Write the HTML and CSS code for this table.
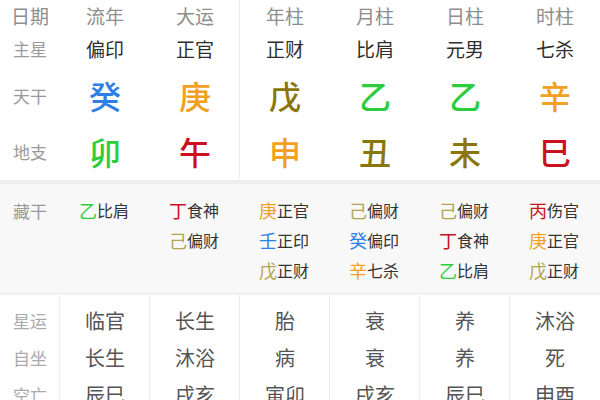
FILE: index.html
```html
<!DOCTYPE html>
<html lang="zh">
<head>
<meta charset="utf-8">
<link rel="stylesheet" href="styles.css">
</head>
<body>
<div class="chart">
  <section class="top">
    <div class="col label">
      <div class="c h">日期</div>
      <div class="c zx">主星</div>
      <div class="c stem">天干</div>
      <div class="c br">地支</div>
    </div>
    <div class="col">
      <div class="c h">流年</div>
      <div class="c zx v">偏印</div>
      <div class="c stem big water">癸</div>
      <div class="c br big wood">卯</div>
    </div>
    <div class="col">
      <div class="c h">大运</div>
      <div class="c zx v">正官</div>
      <div class="c stem big metal">庚</div>
      <div class="c br big fire">午</div>
    </div>
    <div class="col sep">
      <div class="c h">年柱</div>
      <div class="c zx v">正财</div>
      <div class="c stem big earth">戊</div>
      <div class="c br big metal">申</div>
    </div>
    <div class="col">
      <div class="c h">月柱</div>
      <div class="c zx v">比肩</div>
      <div class="c stem big wood">乙</div>
      <div class="c br big earth">丑</div>
    </div>
    <div class="col">
      <div class="c h">日柱</div>
      <div class="c zx v">元男</div>
      <div class="c stem big wood">乙</div>
      <div class="c br big earth">未</div>
    </div>
    <div class="col">
      <div class="c h">时柱</div>
      <div class="c zx v">七杀</div>
      <div class="c stem big metal">辛</div>
      <div class="c br big fire">巳</div>
    </div>
  </section>

  <section class="hidden">
    <div class="col label"><div class="it">藏干</div></div>
    <div class="col"><div class="it"><span class="s wood">乙</span>比肩</div></div>
    <div class="col">
      <div class="it"><span class="s fire">丁</span>食神</div>
      <div class="it"><span class="s earth2">己</span>偏财</div>
    </div>
    <div class="col">
      <div class="it"><span class="s metal">庚</span>正官</div>
      <div class="it"><span class="s water">壬</span>正印</div>
      <div class="it"><span class="s earth2">戊</span>正财</div>
    </div>
    <div class="col">
      <div class="it"><span class="s earth2">己</span>偏财</div>
      <div class="it"><span class="s water">癸</span>偏印</div>
      <div class="it"><span class="s metal">辛</span>七杀</div>
    </div>
    <div class="col">
      <div class="it"><span class="s earth2">己</span>偏财</div>
      <div class="it"><span class="s fire">丁</span>食神</div>
      <div class="it"><span class="s wood">乙</span>比肩</div>
    </div>
    <div class="col">
      <div class="it"><span class="s fire">丙</span>伤官</div>
      <div class="it"><span class="s metal">庚</span>正官</div>
      <div class="it"><span class="s earth2">戊</span>正财</div>
    </div>
  </section>

  <section class="bottom">
    <div class="col label">
      <div class="r">星运</div>
      <div class="r">自坐</div>
      <div class="r">空亡</div>
    </div>
    <div class="col line">
      <div class="r">临官</div>
      <div class="r">长生</div>
      <div class="r">辰巳</div>
    </div>
    <div class="col line">
      <div class="r">长生</div>
      <div class="r">沐浴</div>
      <div class="r">戌亥</div>
    </div>
    <div class="col line">
      <div class="r">胎</div>
      <div class="r">病</div>
      <div class="r">寅卯</div>
    </div>
    <div class="col line">
      <div class="r">衰</div>
      <div class="r">衰</div>
      <div class="r">戌亥</div>
    </div>
    <div class="col line">
      <div class="r">养</div>
      <div class="r">养</div>
      <div class="r">辰巳</div>
    </div>
    <div class="col line">
      <div class="r">沐浴</div>
      <div class="r">死</div>
      <div class="r">申酉</div>
    </div>
  </section>
</div>
</body>
</html>
```

FILE: styles.css
```css
html, body {
  margin: 0;
  padding: 0;
  background: #fff;
  overflow: hidden;
}
body {
  font-family: "Noto Sans CJK SC", "Noto Sans", sans-serif;
  width: 600px;
  height: 400px;
}
.chart {
  width: 600px;
}
section {
  display: flex;
}
.col {
  width: 90px;
  display: flex;
  flex-direction: column;
  align-items: center;
}
.col.label {
  width: 60px;
}

/* top section */
.top {
  background: #fff;
  padding-bottom: 2px;
}
.top .col {
  height: 178px;
}
.top .col.sep {
  border-left: 1px solid #ececec;
  margin-left: -1px;
}
.c {
  display: flex;
  align-items: center;
  justify-content: center;
  line-height: 1;
}
.c.h {
  height: 30px;
  font-size: 19px;
  color: #8e8e8e;
}
.c.zx {
  height: 36px;
  font-size: 17px;
  color: #9a9a9a;
}
.c.zx.v {
  font-size: 19px;
  color: #2e2e2e;
}
.c.stem {
  height: 58px;
  font-size: 17px;
  color: #9a9a9a;
}
.c.br {
  height: 54px;
  font-size: 17px;
  color: #9a9a9a;
}
.c.big {
  font-size: 32px;
  font-weight: 500;
}

/* element colours */
.water { color: #2d7fe6 !important; }
.wood { color: #2bcd3c !important; }
.metal { color: #f2a024 !important; }
.fire { color: #cc1020 !important; }
.earth { color: #8a760a !important; }
.earth2 { color: #b4a452 !important; }

/* hidden stems */
.hidden {
  background: #f8f8f8;
  border-top: 4px solid #eeeeee;
  padding: 11px 0 5px;
  height: 92px;
}
.it {
  height: 30px;
  display: flex;
  align-items: center;
  font-size: 16px;
  color: #333;
  line-height: 1;
  width: 52px;
}
.label .it {
  color: #999;
  font-size: 17px;
  justify-content: center;
  width: auto;
}
.it .s {
  font-size: 18px;
}

/* bottom */
.bottom {
  border-top: 3px solid #f2f2f2;
  background: #fff;
}
.bottom .col {
  padding-top: 7px;
}
.bottom .col.line {
  border-left: 1px solid #ececec;
  margin-left: -1px;
}
.r {
  height: 37px;
  display: flex;
  align-items: center;
  justify-content: center;
  font-size: 20px;
  color: #555;
  line-height: 1;
}
.label .r {
  font-size: 17px;
  color: #aaa;
}
```
